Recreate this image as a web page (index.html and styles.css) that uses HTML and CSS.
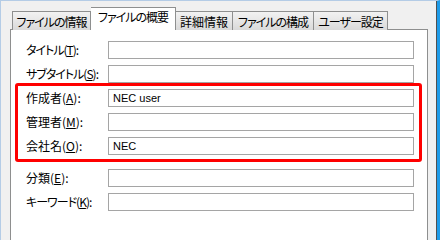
FILE: index.html
```html
<!DOCTYPE html>
<html lang="ja">
<head>
<meta charset="utf-8">
<link rel="stylesheet" href="styles.css">
</head>
<body>
<div class="window">
  <div class="tabs">
    <div class="tab tab-info narrow">ファイルの情報</div>
    <div class="tab tab-summary selected narrow">ファイルの概要</div>
    <div class="tab tab-detail">詳細情報</div>
    <div class="tab tab-struct narrow">ファイルの構成</div>
    <div class="tab tab-user narrow">ユーザー設定</div>
  </div>
  <div class="panel">
    <div class="row"><span class="label narrow">タイトル(<u>T</u>):</span><div class="field"></div></div>
    <div class="row"><span class="label narrow">サブタイトル(<u>S</u>):</span><div class="field"></div></div>
    <div class="row"><span class="label">作成者(<u>A</u>):</span><div class="field">NEC user</div></div>
    <div class="row"><span class="label">管理者(<u>M</u>):</span><div class="field"></div></div>
    <div class="row"><span class="label">会社名(<u>O</u>):</span><div class="field">NEC</div></div>
    <div class="separator"></div>
    <div class="row"><span class="label">分類(<u>E</u>):</span><div class="field"></div></div>
    <div class="row"><span class="label narrow">キーワード(<u>K</u>):</span><div class="field"></div></div>
    <div class="highlight"></div>
  </div>
</div>
</body>
</html>
```

FILE: styles.css
```css
html, body {
  margin: 0;
  padding: 0;
  height: 100%;
}
html {
  background: #f0f0f0;
}
body {
  overflow: hidden;
  background: #f0f0f0;
  font-family: "Noto Sans CJK JP", "Noto Sans", sans-serif;
  font-size: 12px;
  color: #000;
  font-feature-settings: "palt";
}
.window {
  box-sizing: border-box;
  height: 100vh;
  min-height: 219px;
  width: 440px;
  border-top: 1px solid #b4cce6;
  border-left: 1px solid #b4cce6;
  border-right: 3px solid #1e9be8;
  box-shadow: inset -1px 0 0 #505050;
  padding-left: 9px;
  padding-right: 9px;
  display: flex;
  flex-direction: column;
}
.narrow {
  letter-spacing: -1px;
}
.tabs {
  flex: none;
  display: flex;
  align-items: flex-end;
  height: 29px;
  padding-left: 2px;
  position: relative;
  z-index: 2;
  margin-bottom: -1px;
}
.tab {
  box-sizing: border-box;
  height: 19px;
  border: 1px solid #8e8f8f;
  border-bottom: none;
  border-left: none;
  background: linear-gradient(#f2f2f2, #e6e6e6 50%, #d9d9d9);
  display: flex;
  align-items: center;
  justify-content: center;
  line-height: 1;
  padding-top: 1px;
  white-space: nowrap;
  overflow: hidden;
}
.tab-info { width: 79px; border-left: 1px solid #8e8f8f; }
.tab-summary { width: 85px; }
.tab-detail { width: 57px; }
.tab-struct { width: 81px; }
.tab-user { width: 74px; }
.tab.selected {
  height: 23px;
  background: #fff;
  border-left: none;
  padding-bottom: 5px;
}
.panel {
  position: relative;
  flex: 1 0 auto;
  width: 418px;
  box-sizing: border-box;
  background: #fff;
  border: 1px solid #8e8f8f;
  border-bottom: none;
  padding: 11px 0 0 15px;
}
.row {
  display: flex;
  align-items: center;
  height: 18px;
  margin-bottom: 6px;
}
.label {
  width: 82px;
  flex: none;
  white-space: nowrap;
  line-height: 1;
}
.label u {
  text-decoration: underline;
  text-underline-offset: 1px;
}
.field {
  box-sizing: border-box;
  width: 306px;
  height: 18px;
  border: 1px solid #a5a5a5;
  background: #fff;
  padding-left: 4px;
  font-family: "Liberation Sans", Arial, sans-serif;
  font-size: 11px;
  line-height: 16px;
  letter-spacing: 0;
}
.separator {
  height: 1px;
  background: #d6dee6;
  margin: 3px 0 7px 1px;
  width: 386px;
}
.highlight {
  position: absolute;
  left: 4px;
  top: 53px;
  width: 407px;
  height: 79px;
  box-sizing: border-box;
  border: 3px solid #ff0000;
  border-radius: 3px;
}
```
